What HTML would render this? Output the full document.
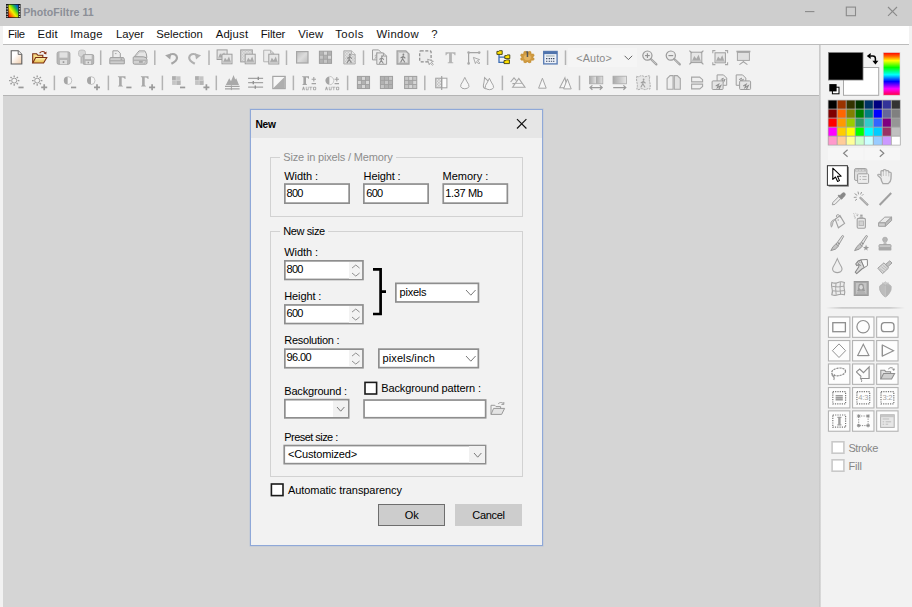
<!DOCTYPE html>
<html><head><meta charset="utf-8"><title>PhotoFiltre 11</title>
<style>
html,body{margin:0;padding:0}
body{width:912px;height:607px;overflow:hidden;position:relative;background:#f2f2f2;font-family:"Liberation Sans",sans-serif;font-size:11px}
.a{position:absolute;box-sizing:border-box}
.t{position:absolute;white-space:pre;line-height:16px;height:16px}
svg{overflow:visible}
</style></head><body>
<div class="a" style="left:0px;top:0px;width:912px;height:26px;background:#cecece"></div>
<svg class="a" style="left:6px;top:4px;" width="15" height="14" viewBox="0 0 15 14"><defs><linearGradient id="ai" x1="0" y1="1" x2="1" y2="0"><stop offset="0" stop-color="#f00"/><stop offset=".22" stop-color="#ff7a00"/><stop offset=".42" stop-color="#f4f000"/><stop offset=".56" stop-color="#9be000"/><stop offset=".7" stop-color="#22b84a"/><stop offset=".84" stop-color="#0a78b0"/><stop offset="1" stop-color="#0838d8"/></linearGradient></defs>
<rect x="0" y="0" width="14.6" height="14" fill="#161616"/><rect x="2.5" y="0.7" width="9.8" height="12.6" fill="url(#ai)"/>
<g fill="#c8c8c8"><rect x=".5" y="1.4" width="1.3" height="1.4"/><rect x=".5" y="4.1" width="1.3" height="1.4"/><rect x=".5" y="6.8" width="1.3" height="1.4"/><rect x=".5" y="9.5" width="1.3" height="1.4"/><rect x=".5" y="12" width="1.3" height="1.2"/>
<rect x="12.9" y="1.4" width="1.3" height="1.4"/><rect x="12.9" y="4.1" width="1.3" height="1.4"/><rect x="12.9" y="6.8" width="1.3" height="1.4"/><rect x="12.9" y="9.5" width="1.3" height="1.4"/><rect x="12.9" y="12" width="1.3" height="1.2"/></g></svg>
<div class="t" style="left:23.20px;top:4.33px;font-size:10.6px;color:#8b8f97;font-weight:bold;letter-spacing:0.033px;">PhotoFiltre 11</div>
<svg class="a" style="left:800px;top:0px;" width="112" height="26" viewBox="0 0 112 26"><g stroke="#8a8a8a" stroke-width="1.1" fill="none">
<path d="M5 11.6H14.4"/><rect x="46.3" y="7.1" width="9.2" height="8.6"/><path d="M88 7L97 15.8M97 7L88 15.8"/></g></svg>
<div class="a" style="left:3px;top:26px;width:906px;height:18px;background:#fff"></div>
<div class="a" style="left:3px;top:44px;width:906px;height:1px;background:#bcbcbc"></div>
<div class="t" style="left:7.90px;top:26.08px;font-size:11.3px;color:#111;letter-spacing:-0.330px;">File</div>
<div class="t" style="left:37.40px;top:26.08px;font-size:11.3px;color:#111;letter-spacing:0.233px;">Edit</div>
<div class="t" style="left:70.15px;top:26.08px;font-size:11.3px;color:#111;letter-spacing:0.252px;">Image</div>
<div class="t" style="left:115.90px;top:26.08px;font-size:11.3px;color:#111;letter-spacing:-0.023px;">Layer</div>
<div class="t" style="left:156.15px;top:26.08px;font-size:11.3px;color:#111;letter-spacing:0.018px;">Selection</div>
<div class="t" style="left:215.65px;top:26.08px;font-size:11.3px;color:#111;letter-spacing:0.207px;">Adjust</div>
<div class="t" style="left:260.65px;top:26.08px;font-size:11.3px;color:#111;letter-spacing:-0.079px;">Filter</div>
<div class="t" style="left:298.15px;top:26.08px;font-size:11.3px;color:#111;letter-spacing:0.217px;">View</div>
<div class="t" style="left:335.15px;top:26.08px;font-size:11.3px;color:#111;letter-spacing:0.502px;">Tools</div>
<div class="t" style="left:376.40px;top:26.08px;font-size:11.3px;color:#111;letter-spacing:0.413px;">Window</div>
<div class="t" style="left:431.15px;top:26.08px;font-size:11.3px;color:#111;letter-spacing:0.000px;">?</div>
<div class="a" style="left:3px;top:45px;width:816px;height:50px;background:#f2f2f2"></div>
<div class="a" style="left:3px;top:95px;width:817px;height:1px;background:#b4b4b4"></div>
<div class="a" style="left:3px;top:96px;width:816px;height:511px;background:#d5d5d5"></div>
<div class="a" style="left:819px;top:45px;width:2px;height:562px;background:linear-gradient(90deg,#c4c4c4,#dedede)"></div>
<div class="a" style="left:821px;top:45px;width:91px;height:562px;background:#f2f2f2"></div>
<svg class="a" style="left:0;top:0" width="912" height="100" viewBox="0 0 912 100"><defs>
<linearGradient id="gNew" x1="0" y1="0" x2="1" y2="1"><stop offset=".35" stop-color="#fff"/><stop offset="1" stop-color="#efc9a6"/></linearGradient>
<linearGradient id="gFold" x1="0" y1="0" x2="0" y2="1"><stop offset="0" stop-color="#fdf2b6"/><stop offset="1" stop-color="#e6bc48"/></linearGradient>
<linearGradient id="gRect" x1="0" y1="0" x2="1" y2="1"><stop offset="0" stop-color="#bcbcbc"/><stop offset=".5" stop-color="#dcdcdc"/><stop offset="1" stop-color="#bdbdbd"/></linearGradient>
<linearGradient id="gH" x1="0" y1="0" x2="1" y2="0"><stop offset="0" stop-color="#a9a9a9"/><stop offset="1" stop-color="#e6e6e6"/></linearGradient>
<linearGradient id="gH2" x1="0" y1="0" x2="1" y2="0"><stop offset="0" stop-color="#a9a9a9"/><stop offset=".5" stop-color="#e2e2e2"/><stop offset=".5" stop-color="#a9a9a9"/><stop offset="1" stop-color="#e2e2e2"/></linearGradient>
<pattern id="chk" width="3" height="3" patternUnits="userSpaceOnUse"><rect width="3" height="3" fill="#eeeeee"/><rect width="1.5" height="1.5" fill="#bcbcbc"/><rect x="1.5" y="1.5" width="1.5" height="1.5" fill="#bcbcbc"/></pattern>
</defs>
<g transform="translate(10.6,50.2)"><path d="M.6 .6H7.6L11.2 4.2V13.8H.6Z" fill="url(#gNew)" stroke="#5c5c5c" stroke-width="1.1"/><path d="M7.6 .6V4.2H11.2" fill="#f4f4f4" stroke="#5c5c5c" stroke-width=".9"/></g>
<g transform="translate(32,50.6)"><path d="M.7 12.4V3.2H4.6L5.9 4.7H10.8V7" fill="#f6dc86" stroke="#7b2d12" stroke-width="1.1"/>
<path d="M.7 12.4L3.7 6.9H14.8L11.6 12.4Z" fill="url(#gFold)" stroke="#7b2d12" stroke-width="1.1"/>
<path d="M7.6 2.6C9.4 .2 12.4 .4 13.6 2.8" fill="none" stroke="#8a3216" stroke-width="1.1"/><path d="M14.6 .8L14.3 4L11.6 3Z" fill="#8a3216"/></g>
<g transform="translate(56.6,51.4)"><rect x=".5" y=".5" width="12.8" height="12.4" rx="1.6" fill="#b6b6b6" stroke="#a6a6a6"/>
<rect x="2.9" y=".9" width="8" height="5.4" fill="#e1e1e1"/><rect x="3.4" y="8.6" width="7" height="4.2" fill="#dedede"/><rect x="6.1" y="9.8" width="1.6" height="1.8" fill="#9a9a9a"/></g>
<g transform="translate(78,49.2)"><rect x=".5" y=".9" width="7" height="6.6" rx="2.4" fill="#d6d6d6" stroke="#c2c2c2"/>
<path d="M3.2 7.5V14.2" stroke="#b0b0b0" stroke-width="1.4"/>
<rect x="4.9" y="5.4" width="10.8" height="9.8" rx="1.4" fill="#b6b6b6" stroke="#a8a8a8"/><rect x="6.8" y="5.9" width="6.9" height="4" fill="#e2e2e2"/><rect x="7.6" y="11.8" width="5.4" height="3.2" fill="#dedede"/><rect x="9.6" y="12.6" width="1.4" height="1.5" fill="#9a9a9a"/></g>
<rect x="99.95" y="50.4" width="1.5" height="14.6" fill="#b3b3b3"/>
<g transform="translate(109.3,50.2)"><path d="M3.6 7.2V.6H8.6L11 3V7.2" fill="#ededed" stroke="#9e9e9e"/><path d="M5.6 3.4H7.2" stroke="#aaa"/>
<path d="M1 7.4H14.2L15 9V13.6H.5V9Z" fill="#cdcdcd" stroke="#9e9e9e"/><path d="M.8 10.6H14.8" stroke="#a4a4a4"/><rect x="11.2" y="8.4" width="1.8" height="1" fill="#8f8f8f"/></g>
<g transform="translate(132.6,50.2)"><path d="M1.6 6.6L6.4 .7H12.2Q14.2 3 14.3 7.4L7 7Z" fill="#e6e6e6" stroke="#9e9e9e"/><path d="M3.4 6.2L7 1.8H11.6" fill="none" stroke="#c4c4c4" stroke-width=".8"/>
<path d="M.6 7.6Q.6 6.6 1.6 6.6H10.6Q14.4 6.8 14.4 9.4V12.6Q14.4 14 13 14H2Q.6 14 .6 12.6Z" fill="#d2d2d2" stroke="#9e9e9e"/>
<path d="M1 10H14" stroke="#a6a6a6"/><rect x="6.4" y="11.2" width="3.8" height="1.1" fill="#8c8c8c"/><path d="M11.4 13.6L14 10.2" stroke="#b4b4b4"/></g>
<rect x="154.05" y="50.4" width="1.5" height="14.6" fill="#b3b3b3"/>
<g transform="translate(164.8,52.2)"><path d="M6.6 11.6Q12.4 8.4 12.2 5.4Q11.6 1.8 8 1.8Q5.8 1.8 4.2 3.6" fill="none" stroke="#a6a6a6" stroke-width="2.2"/><path d="M.3 3L6.4 1.4L5.4 7.4Z" fill="#a6a6a6"/></g>
<g transform="translate(188.2,52.2)"><path d="M6.6 11.6Q.8 8.4 1 5.4Q1.6 1.8 5.2 1.8Q7.4 1.8 9 3.6" fill="none" stroke="#b0b0b0" stroke-width="2.2"/><path d="M12.9 3L6.8 1.4L7.8 7.4Z" fill="#b0b0b0"/></g>
<rect x="208.25" y="50.4" width="1.5" height="14.6" fill="#b3b3b3"/>
<g transform="translate(216.6,49.4)"><rect x="0.5" y="0.5" width="10" height="9.6" fill="#e6e6e6" stroke="#9e9e9e"/><path d="M1.5 8.5L3.5 3.956L5.5 6.452L7.5 2.804L9.5 8.5Z" fill="#a9a9a9"/><rect x="1.1" y="7.8999999999999995" width="8.8" height="1.6" fill="#c9c9c9"/><rect x="5.4" y="4.8" width="10" height="9.6" fill="#e6e6e6" stroke="#9e9e9e"/><path d="M6.4 12.799999999999999L8.4 8.256L10.4 10.751999999999999L12.4 7.103999999999999L14.4 12.799999999999999Z" fill="#a9a9a9"/><rect x="6.0" y="12.2" width="8.8" height="1.6" fill="#c9c9c9"/></g>
<g transform="translate(240.2,49.4)"><rect x=".5" y=".5" width="11.6" height="12" fill="url(#chk)" stroke="#9e9e9e"/><rect x="5" y="4.8" width="10" height="9.6" fill="#e6e6e6" stroke="#9e9e9e"/><path d="M6 12.799999999999999L8.0 8.256L10.0 10.751999999999999L12.0 7.103999999999999L14 12.799999999999999Z" fill="#a9a9a9"/><rect x="5.6" y="12.2" width="8.8" height="1.6" fill="#c9c9c9"/></g>
<g transform="translate(263.2,49.4)"><path d="M.5 .8H7.4L10.4 3.8V12.4H.5Z" fill="#ebebeb" stroke="#b4b4b4"/><path d="M7.4 .8V3.8H10.4" fill="none" stroke="#b4b4b4"/><rect x="5.6" y="4.8" width="10" height="9.8" fill="#e6e6e6" stroke="#9e9e9e"/><path d="M6.6 13.000000000000002L8.6 8.328L10.6 10.876000000000001L12.6 7.151999999999999L14.6 13.000000000000002Z" fill="#a9a9a9"/><rect x="6.199999999999999" y="12.400000000000002" width="8.8" height="1.6" fill="#c9c9c9"/></g>
<rect x="285.75" y="50.4" width="1.5" height="14.6" fill="#b3b3b3"/>
<g transform="translate(296,51)"><rect x=".6" y=".6" width="11.4" height="11.4" fill="url(#gRect)" stroke="#a6a6a6" stroke-width="1.2"/></g>
<g transform="translate(319,50.8)"><rect x="0.40" y="0.40" width="4.05" height="4.05" fill="#b2b2b2"/><rect x="4.45" y="0.40" width="4.05" height="4.05" fill="#d6d6d6"/><rect x="8.50" y="0.40" width="4.05" height="4.05" fill="#b2b2b2"/><rect x="0.40" y="4.45" width="4.05" height="4.05" fill="#c6c6c6"/><rect x="4.45" y="4.45" width="4.05" height="4.05" fill="#b2b2b2"/><rect x="8.50" y="4.45" width="4.05" height="4.05" fill="#d6d6d6"/><rect x="0.40" y="8.50" width="4.05" height="4.05" fill="#b2b2b2"/><rect x="4.45" y="8.50" width="4.05" height="4.05" fill="#c6c6c6"/><rect x="8.50" y="8.50" width="4.05" height="4.05" fill="#b2b2b2"/><path d="M4.45 .4V12.55M8.5 .4V12.55M.4 4.45H12.55M.4 8.5H12.55" stroke="#9e9e9e" stroke-width=".9"/><rect x=".4" y=".4" width="12.15" height="12.15" fill="none" stroke="#9e9e9e" stroke-width="1"/></g>
<g transform="translate(343.2,50.2)"><path d="M.6 .6H8.4L12 4.2V13.8H.6Z" fill="url(#chk)" stroke="#b0b0b0"/><path d="M8.4 .6V4.2H12" fill="#eee" stroke="#b0b0b0"/><g transform="translate(3,3.6) scale(1.05)" fill="none" stroke="#8e8e8e" stroke-width="1.1" stroke-linecap="round"><circle cx="3.6" cy=".9" r=".9" fill="#8e8e8e" stroke="none"/><path d="M3.4 2.2L2.8 5.2L1 8.4M2.8 5.2L4.8 8.4M1.2 4.2L3.4 2.8L5.2 4.4"/></g></g>
<rect x="362.75" y="50.4" width="1.5" height="14.6" fill="#b3b3b3"/>
<g transform="translate(372,49.3)"><path d="M.5 .6H6.6L9.4 3.4V10.6H.5Z" fill="#ededed" stroke="#9e9e9e"/><g transform="translate(2,3) scale(0.8)" fill="none" stroke="#aaa" stroke-width="1.1" stroke-linecap="round"><circle cx="3.6" cy=".9" r=".9" fill="#aaa" stroke="none"/><path d="M3.4 2.2L2.8 5.2L1 8.4M2.8 5.2L4.8 8.4M1.2 4.2L3.4 2.8L5.2 4.4"/></g><path d="M4.8 3.6H11.4L14.6 6.8V15H4.8Z" fill="#e9e9e9" stroke="#9e9e9e"/><path d="M11.4 3.6V6.8H14.6" fill="none" stroke="#9e9e9e"/><g transform="translate(6.6,6) scale(0.95)" fill="none" stroke="#8e8e8e" stroke-width="1.1" stroke-linecap="round"><circle cx="3.6" cy=".9" r=".9" fill="#8e8e8e" stroke="none"/><path d="M3.4 2.2L2.8 5.2L1 8.4M2.8 5.2L4.8 8.4M1.2 4.2L3.4 2.8L5.2 4.4"/></g></g>
<g transform="translate(396.4,50.2)"><path d="M.7 .7H9.4L12.6 3.9V13.8H.7Z" fill="#c9c9c9" stroke="#a2a2a2" stroke-width="1.3"/><rect x="2.6" y="2.8" width="8.2" height="9" fill="#e2e2e2"/><g transform="translate(3.4,3.4) scale(1.0)" fill="none" stroke="#868686" stroke-width="1.1" stroke-linecap="round"><circle cx="3.6" cy=".9" r=".9" fill="#868686" stroke="none"/><path d="M3.4 2.2L2.8 5.2L1 8.4M2.8 5.2L4.8 8.4M1.2 4.2L3.4 2.8L5.2 4.4"/></g></g>
<g transform="translate(419,50.2)"><rect x=".7" y=".7" width="11.4" height="11" rx="1" fill="#ededed" stroke="#8c8c8c" stroke-width="1.2" stroke-dasharray="3 1.6"/><path d="M8.6 9L14.4 11.2L12.2 12L14.4 14.2L13.4 15L11.2 12.8L10.2 14.6Z" fill="#f4f4f4" stroke="#a2a2a2" stroke-width=".9"/></g>
<g transform="translate(445.2,52)"><path d="M.3 .2H10.3V3.2H9.4Q9.2 1.6 7.6 1.6H6.7V9.4Q6.7 10.3 8.1 10.4V11.2H2.5V10.4Q3.9 10.3 3.9 9.4V1.6H3Q1.4 1.6 1.2 3.2H.3Z" fill="#b4b4b4"/></g>
<g transform="translate(467,51)"><path d="M1.6 12.4V1.6H12.2" fill="none" stroke="#a4a4a4" stroke-width="1.2"/><circle cx="1.6" cy="1.6" r="1.3" fill="#a9a9a9"/><circle cx="12.2" cy="1.6" r="1.3" fill="#a9a9a9"/><circle cx="1.6" cy="12.4" r="1.3" fill="#a9a9a9"/><path d="M6.4 6.4L12.6 8.6L10.4 9.6L12.8 12L11.8 13L9.4 10.6L8.4 12.6Z" fill="#f2f2f2" stroke="#a4a4a4" stroke-width=".9"/></g>
<rect x="486.85" y="50.4" width="1.5" height="14.6" fill="#b3b3b3"/>
<g transform="translate(496.4,50.2)"><path d="M2.6 4V12.2H8M2.6 7H8.6" fill="none" stroke="#3b6cb4" stroke-width="1.3"/>
<g fill="#ffe100" stroke="#2a2a00" stroke-width=".8"><path d="M.5 1.2H2.4L3 .5H5.8V4.2H.5Z"/><path d="M8.4 5.4H10.2L10.8 4.7H13.4V8.4H8.4Z"/><path d="M7.6 10.4H9.4L10 9.7H13V13.4H7.6Z"/></g></g>
<g transform="translate(520,50.6)"><path d="M12.03 7.28L13.28 7.99L12.80 8.97L11.32 8.72L10.02 9.83L10.31 11.08L9.16 11.48L8.32 10.42L6.48 10.42L5.64 11.48L4.49 11.08L4.78 9.83L3.48 8.72L2.00 8.97L1.52 7.99L2.77 7.28L2.77 5.72L1.52 5.01L2.00 4.03L3.48 4.28L4.78 3.17L4.49 1.92L5.64 1.52L6.48 2.58L8.32 2.58L9.16 1.52L10.31 1.92L10.02 3.17L11.32 4.28L12.80 4.03L13.28 5.01L12.03 5.72Z" fill="#d9a54c" stroke="#d29c42" stroke-width="2" stroke-linejoin="round"/><path d="M12.03 7.28L13.28 7.99L12.80 8.97L11.32 8.72L10.02 9.83L10.31 11.08L9.16 11.48L8.32 10.42L6.48 10.42L5.64 11.48L4.49 11.08L4.78 9.83L3.48 8.72L2.00 8.97L1.52 7.99L2.77 7.28L2.77 5.72L1.52 5.01L2.00 4.03L3.48 4.28L4.78 3.17L4.49 1.92L5.64 1.52L6.48 2.58L8.32 2.58L9.16 1.52L10.31 1.92L10.02 3.17L11.32 4.28L12.80 4.03L13.28 5.01L12.03 5.72Z" fill="none" stroke="#c08f36" stroke-width=".5" stroke-linejoin="round" transform="translate(7.4,6.5) scale(1.16) translate(-7.4,-6.5)"/><ellipse cx="7.4" cy="6.9" rx="3.4" ry="2.8" fill="#e3b462"/>
<path d="M6.7 .6H8.2V6.4H6.7Z" fill="#555"/><path d="M5.9 1.8L7 .8" stroke="#555" stroke-width=".9"/></g>
<g transform="translate(543,50.8)"><rect x=".7" y=".7" width="13.4" height="12.4" fill="#eef2f9" stroke="#5e80b6" stroke-width="1.4"/><rect x=".7" y=".7" width="13.4" height="2.6" fill="#4f74ad"/>
<path d="M3 5.2H11.6" stroke="#9aa" stroke-width="1"/><path d="M3 7.8H4.4M5.6 7.8H11.6M3 10.4H4.4M5.6 10.4H11.6" stroke="#3a4a66" stroke-width="1.1" stroke-dasharray="1.4 .8"/></g>
<rect x="564.75" y="50.4" width="1.5" height="14.6" fill="#b3b3b3"/>
<g transform="translate(642,50.2)"><circle cx="5.4" cy="5.4" r="4.6" fill="#ececec" stroke="#9a9a9a" stroke-width="1.2"/><path d="M8.8 8.8L14.4 14.2" stroke="#a0a0a0" stroke-width="2.2" stroke-linecap="round"/><path d="M9.4 9.4L14 13.8" stroke="#d4d4d4" stroke-width=".7"/><path d="M3 5.4H7.8" stroke="#909090" stroke-width="1.1"/><path d="M5.4 3V7.8" stroke="#909090" stroke-width="1.1"/></g>
<g transform="translate(665.4,50.2)"><circle cx="5.4" cy="5.4" r="4.6" fill="#ececec" stroke="#9a9a9a" stroke-width="1.2"/><path d="M8.8 8.8L14.4 14.2" stroke="#a0a0a0" stroke-width="2.2" stroke-linecap="round"/><path d="M9.4 9.4L14 13.8" stroke="#d4d4d4" stroke-width=".7"/><path d="M3 5.4H7.8" stroke="#909090" stroke-width="1.1"/></g>
<g transform="translate(689,50.2)"><rect x="2" y="2" width="10.8" height="10.4" fill="#e6e6e6" stroke="#9e9e9e"/><path d="M3 10.8L5.24 5.744L7.4 8.448L9.559999999999999 4.496L11.8 10.8Z" fill="#a9a9a9"/><rect x="2.6" y="10.2" width="9.600000000000001" height="1.6" fill="#c9c9c9"/><path d="M.4 .4L3 3M14.4 .4L11.8 3M.4 14.2L3 11.6M14.4 14.2L11.8 11.6" stroke="#a0a0a0" stroke-width="1.2"/></g>
<g transform="translate(712.4,50.2)"><rect x="2.6" y="2.6" width="10.4" height="10" fill="#e6e6e6" stroke="#9e9e9e"/><path d="M3.6 11.0L5.720000000000001 6.199999999999999L7.800000000000001 8.8L9.879999999999999 5.0L12.0 11.0Z" fill="#a9a9a9"/><rect x="3.2" y="10.399999999999999" width="9.200000000000001" height="1.6" fill="#c9c9c9"/><path d="M.4 3V.4H3M12.6 .4H15.2V3M.4 12V14.4H3M12.6 14.4H15.2V12" fill="none" stroke="#a6a6a6" stroke-width="1.1"/></g>
<g transform="translate(736,50.4)"><rect x=".4" y=".3" width="14" height="1.6" fill="#a6a6a6"/><rect x="1.4" y="2" width="12" height="8" fill="#e0e0e0" stroke="#a6a6a6"/><path d="M7.4 10V12M7.4 11.4L3.4 14.2M7.4 11.4L11.4 14.2" stroke="#a6a6a6" stroke-width="1.1" fill="none"/></g>
<rect x="568" y="48" width="69" height="19" fill="#f5f5f5"/>
<path d="M624.6 55.8L628.4 59.6L632.2 55.8" fill="none" stroke="#666" stroke-width="1"/>
<g transform="translate(9,75.4)"><circle cx="5.2" cy="5.2" r="2.5" fill="#f4f4f4" stroke="#9c9c9c" stroke-width="1"/><path d="M8.70 5.20L10.40 5.20" stroke="#9c9c9c" stroke-width="1.35"/><path d="M7.67 7.67L8.88 8.88" stroke="#9c9c9c" stroke-width="1.35"/><path d="M5.20 8.70L5.20 10.40" stroke="#9c9c9c" stroke-width="1.35"/><path d="M2.73 7.67L1.52 8.88" stroke="#9c9c9c" stroke-width="1.35"/><path d="M1.70 5.20L0.00 5.20" stroke="#9c9c9c" stroke-width="1.35"/><path d="M2.73 2.73L1.52 1.52" stroke="#9c9c9c" stroke-width="1.35"/><path d="M5.20 1.70L5.20 0.00" stroke="#9c9c9c" stroke-width="1.35"/><path d="M7.67 2.73L8.88 1.52" stroke="#9c9c9c" stroke-width="1.35"/><rect x="9.4" y="11.2" width="5.2" height="1.7" fill="#9a9a9a"/></g>
<g transform="translate(32,75.4)"><circle cx="5.2" cy="5.2" r="2.5" fill="#f4f4f4" stroke="#9c9c9c" stroke-width="1"/><path d="M8.70 5.20L10.40 5.20" stroke="#9c9c9c" stroke-width="1.35"/><path d="M7.67 7.67L8.88 8.88" stroke="#9c9c9c" stroke-width="1.35"/><path d="M5.20 8.70L5.20 10.40" stroke="#9c9c9c" stroke-width="1.35"/><path d="M2.73 7.67L1.52 8.88" stroke="#9c9c9c" stroke-width="1.35"/><path d="M1.70 5.20L0.00 5.20" stroke="#9c9c9c" stroke-width="1.35"/><path d="M2.73 2.73L1.52 1.52" stroke="#9c9c9c" stroke-width="1.35"/><path d="M5.20 1.70L5.20 0.00" stroke="#9c9c9c" stroke-width="1.35"/><path d="M7.67 2.73L8.88 1.52" stroke="#9c9c9c" stroke-width="1.35"/><path d="M9.2 11.9H15.2M12.2 8.9V14.9" stroke="#9a9a9a" stroke-width="1.7"/></g>
<rect x="53.65" y="75.6" width="1.5" height="14.6" fill="#b3b3b3"/>
<g transform="translate(63.6,76.4)"><path d="M4.2 .2A4 4 0 0 0 4.2 8.2Z" fill="#a6a6a6"/><path d="M4.2 .2A4 4 0 0 1 4.2 8.2" fill="#f6f6f6" stroke="#b8b8b8" stroke-width=".8"/><rect x="7.4" y="10.2" width="5.2" height="1.7" fill="#9a9a9a"/></g>
<g transform="translate(86.8,76.4)"><path d="M4.2 .2A4 4 0 0 0 4.2 8.2Z" fill="#a6a6a6"/><path d="M4.2 .2A4 4 0 0 1 4.2 8.2" fill="#f6f6f6" stroke="#b8b8b8" stroke-width=".8"/><path d="M7.2 10.9H13.2M10.2 7.9V13.9" stroke="#9a9a9a" stroke-width="1.7"/></g>
<rect x="107.65" y="75.6" width="1.5" height="14.6" fill="#b3b3b3"/>
<g transform="translate(117.7,76)"><path d="M.2 .2H7.8V3H7.1Q6.9 1.4 5.2 1.4H4V9Q4 9.8 5.2 9.9V10.6H.4V9.9Q1.4 9.8 1.4 9V1.8Q1.4 1 .2 .9Z" fill="#a8a8a8"/><rect x="8.6" y="10.6" width="5.2" height="1.7" fill="#9a9a9a"/></g>
<g transform="translate(140.7,76)"><path d="M.2 .2H7.8V3H7.1Q6.9 1.4 5.2 1.4H4V9Q4 9.8 5.2 9.9V10.6H.4V9.9Q1.4 9.8 1.4 9V1.8Q1.4 1 .2 .9Z" fill="#a8a8a8"/><path d="M8.4 11.3H14.4M11.4 8.3V14.3" stroke="#9a9a9a" stroke-width="1.7"/></g>
<rect x="161.65" y="75.6" width="1.5" height="14.6" fill="#b3b3b3"/>
<g transform="translate(171.8,76)"><rect x=".3" y=".3" width="8.4" height="8.6" fill="#c4c4c4"/><rect x=".3" y=".3" width="4" height="4" fill="#adadad"/><rect x="4.6" y="4.6" width="4.1" height="4.3" fill="#b4b4b4"/><path d="M4.4 .3V8.9M.3 4.4H8.7" stroke="#d8d8d8" stroke-width=".7"/><rect x="8.2" y="10.6" width="5.2" height="1.7" fill="#9a9a9a"/></g>
<g transform="translate(194.8,76)"><rect x=".3" y=".3" width="8.4" height="8.6" fill="#c4c4c4"/><rect x=".3" y=".3" width="4" height="4" fill="#adadad"/><rect x="4.6" y="4.6" width="4.1" height="4.3" fill="#b4b4b4"/><path d="M4.4 .3V8.9M.3 4.4H8.7" stroke="#d8d8d8" stroke-width=".7"/><path d="M8.6 11.3H14.6M11.6 8.3V14.3" stroke="#9a9a9a" stroke-width="1.7"/></g>
<rect x="215.55" y="75.6" width="1.5" height="14.6" fill="#b3b3b3"/>
<g transform="translate(224.8,74.7)"><path d="M1 10.4L4.4 3.6L6.2 6.6L8.8 .4L10.4 4.8L11.4 3.6L14.2 10.4Z" fill="#a9a9a9"/><path d="M.2 11.6H14.8M.2 14.2H14.8" stroke="#a2a2a2" stroke-width="1.2"/><path d="M6.6 10.6V15.4" stroke="#a2a2a2" stroke-width="1"/></g>
<g transform="translate(247.9,76.7)"><path d="M.2 1.6H15.2M.2 6H15.2M.2 10.4H15.2" stroke="#a4a4a4" stroke-width="1.2"/><path d="M10.4 0V3.2M5.4 4.4V7.6M7.4 8.8V12" stroke="#909090" stroke-width="1.4"/></g>
<g transform="translate(272.2,75.8)"><rect x=".6" y=".6" width="12.4" height="12.2" fill="#f7f7f7" stroke="#a6a6a6" stroke-width="1.2"/><path d="M12.6 1L12.6 12.4H1Z" fill="#aeaeae"/></g>
<rect x="292.65" y="75.6" width="1.5" height="14.6" fill="#b3b3b3"/>
<g transform="translate(302,76)"><path d="M.2 .2H7V2.8H6.4Q6.2 1.4 4.8 1.4H4V7.6Q4 8.3 5 8.4V9H.4V8.4Q1.4 8.3 1.4 7.6V1.6Q1.4 1 .2 .9Z" fill="#a4a4a4"/><path d="M9.6 3.2H14M11.8 1V5.4M9.6 7.6H14" stroke="#a2a2a2" stroke-width="1.1"/><g fill="#a6a6a6"><path d="M0 14.2L1 10.8H2L3 14.2H2.2L2 13.4H1L.8 14.2ZM3.8 10.8H4.6V13.2Q4.6 13.6 5.2 13.6Q5.8 13.6 5.8 13.2V10.8H6.6V13.4Q6.6 14.3 5.2 14.3Q3.8 14.3 3.8 13.4ZM7.2 10.8H10.4V11.5H9.2V14.2H8.4V11.5H7.2Z"/><rect x="11" y="10.8" width="3.2" height="3.4" rx="1"/></g><rect x="11.9" y="11.6" width="1.4" height="1.8" fill="#f2f2f2"/></g>
<g transform="translate(325,76)"><path d="M4.6 .4A4.2 4.2 0 0 0 4.6 8.8Z" fill="#a4a4a4"/><path d="M4.6 .4A4.2 4.2 0 0 1 4.6 8.8" fill="#f4f4f4" stroke="#bdbdbd" stroke-width=".8"/><path d="M9.6 3.2H14M11.8 1V5.4M9.6 7.6H14" stroke="#a2a2a2" stroke-width="1.1"/><g fill="#a6a6a6"><path d="M0 14.2L1 10.8H2L3 14.2H2.2L2 13.4H1L.8 14.2ZM3.8 10.8H4.6V13.2Q4.6 13.6 5.2 13.6Q5.8 13.6 5.8 13.2V10.8H6.6V13.4Q6.6 14.3 5.2 14.3Q3.8 14.3 3.8 13.4ZM7.2 10.8H10.4V11.5H9.2V14.2H8.4V11.5H7.2Z"/><rect x="11" y="10.8" width="3.2" height="3.4" rx="1"/></g><rect x="11.9" y="11.6" width="1.4" height="1.8" fill="#f2f2f2"/></g>
<rect x="346.85" y="75.6" width="1.5" height="14.6" fill="#b3b3b3"/>
<g transform="translate(357,76)"><rect x="0.40" y="0.40" width="4.05" height="4.05" fill="#b2b2b2"/><rect x="4.45" y="0.40" width="4.05" height="4.05" fill="#d6d6d6"/><rect x="8.50" y="0.40" width="4.05" height="4.05" fill="#b2b2b2"/><rect x="0.40" y="4.45" width="4.05" height="4.05" fill="#d6d6d6"/><rect x="4.45" y="4.45" width="4.05" height="4.05" fill="#b2b2b2"/><rect x="8.50" y="4.45" width="4.05" height="4.05" fill="#d6d6d6"/><rect x="0.40" y="8.50" width="4.05" height="4.05" fill="#b2b2b2"/><rect x="4.45" y="8.50" width="4.05" height="4.05" fill="#d6d6d6"/><rect x="8.50" y="8.50" width="4.05" height="4.05" fill="#b2b2b2"/><path d="M4.45 .4V12.55M8.5 .4V12.55M.4 4.45H12.55M.4 8.5H12.55" stroke="#9e9e9e" stroke-width=".9"/><rect x=".4" y=".4" width="12.15" height="12.15" fill="none" stroke="#9e9e9e" stroke-width="1"/></g>
<g transform="translate(380,76)"><rect x="0.40" y="0.40" width="4.05" height="4.05" fill="#b2b2b2"/><rect x="4.45" y="0.40" width="4.05" height="4.05" fill="#b2b2b2"/><rect x="8.50" y="0.40" width="4.05" height="4.05" fill="#c6c6c6"/><rect x="0.40" y="4.45" width="4.05" height="4.05" fill="#b2b2b2"/><rect x="4.45" y="4.45" width="4.05" height="4.05" fill="#c6c6c6"/><rect x="8.50" y="4.45" width="4.05" height="4.05" fill="#b2b2b2"/><rect x="0.40" y="8.50" width="4.05" height="4.05" fill="#c6c6c6"/><rect x="4.45" y="8.50" width="4.05" height="4.05" fill="#b2b2b2"/><rect x="8.50" y="8.50" width="4.05" height="4.05" fill="#b2b2b2"/><path d="M4.45 .4V12.55M8.5 .4V12.55M.4 4.45H12.55M.4 8.5H12.55" stroke="#9e9e9e" stroke-width=".9"/><rect x=".4" y=".4" width="12.15" height="12.15" fill="none" stroke="#9e9e9e" stroke-width="1"/></g>
<g transform="translate(404.2,76)"><rect x="0.40" y="0.40" width="4.05" height="4.05" fill="#c6c6c6"/><rect x="4.45" y="0.40" width="4.05" height="4.05" fill="#d6d6d6"/><rect x="8.50" y="0.40" width="4.05" height="4.05" fill="#c6c6c6"/><rect x="0.40" y="4.45" width="4.05" height="4.05" fill="#c6c6c6"/><rect x="4.45" y="4.45" width="4.05" height="4.05" fill="#b2b2b2"/><rect x="8.50" y="4.45" width="4.05" height="4.05" fill="#d6d6d6"/><rect x="0.40" y="8.50" width="4.05" height="4.05" fill="#c6c6c6"/><rect x="4.45" y="8.50" width="4.05" height="4.05" fill="#d6d6d6"/><rect x="8.50" y="8.50" width="4.05" height="4.05" fill="#c6c6c6"/><path d="M4.45 .4V12.55M8.5 .4V12.55M.4 4.45H12.55M.4 8.5H12.55" stroke="#9e9e9e" stroke-width=".9"/><rect x=".4" y=".4" width="12.15" height="12.15" fill="none" stroke="#9e9e9e" stroke-width="1"/></g>
<rect x="424.05" y="75.6" width="1.5" height="14.6" fill="#b3b3b3"/>
<g transform="translate(435.2,76)"><rect x=".5" y="2.2" width="6" height="9.6" fill="url(#chk)" stroke="#a2a2a2"/><rect x="6.5" y="2.2" width="5.2" height="9.6" fill="#fbfbfb" stroke="#a2a2a2"/><path d="M6.5 0V14" stroke="#a0a0a0" stroke-width="1.1"/></g>
<g transform="translate(460,77)"><path d="M4.8 .4Q6.6 4.4 8.6 7.4Q9.8 10 7.6 11.2Q4.8 12.4 2 11.2Q-.2 10 1 7.4Q3 4.4 4.8 .4Z" fill="#f6f6f6" stroke="#a6a6a6" stroke-width="1"/></g>
<g transform="translate(482,76.7)"><g transform="rotate(-20 5 7)"><path d="M4.8 .4Q6.6 4.4 8.6 7.4Q9.8 10 7.6 11.2Q4.8 12.4 2 11.2Q-.2 10 1 7.4Q3 4.4 4.8 .4Z" fill="#f6f6f6" stroke="#a6a6a6" stroke-width="1"/></g><g transform="translate(2.6,1.2)"><path d="M4.8 .4Q6.6 4.4 8.6 7.4Q9.8 10 7.6 11.2Q4.8 12.4 2 11.2Q-.2 10 1 7.4Q3 4.4 4.8 .4Z" fill="#f6f6f6" stroke="#a6a6a6" stroke-width="1"/></g></g>
<rect x="501.65" y="75.6" width="1.5" height="14.6" fill="#b3b3b3"/>
<g transform="translate(510,77)"><path d="M.6 5L4 .8L6.4 3.6M2.4 6.6L7.2 6.6" fill="none" stroke="#a6a6a6" stroke-width="1.1"/><path d="M2.6 10.2L8.8 1.4L15 10.2Z" fill="#f6f6f6" stroke="#a6a6a6" stroke-width="1.1"/><path d="M5.4 6.4H12.2" stroke="#b4b4b4"/></g>
<g transform="translate(538,77.6)"><path d="M4.4 .6L8.2 10.6H.6Z" fill="#f7f7f7" stroke="#a6a6a6" stroke-width="1"/></g>
<g transform="translate(560.6,76.7)"><g transform="translate(0,.4) skewX(-8)"><path d="M4.4 .6L8.2 10.6H.6Z" fill="#f7f7f7" stroke="#a6a6a6" stroke-width="1"/></g><g transform="translate(2.4,1.6)"><path d="M4.4 .6L8.2 10.6H.6Z" fill="#f7f7f7" stroke="#a6a6a6" stroke-width="1"/></g></g>
<rect x="578.75" y="75.6" width="1.5" height="14.6" fill="#b3b3b3"/>
<g transform="translate(589,76)"><rect x=".4" y=".2" width="13.4" height="7.6" fill="url(#gH2)" stroke="#a9a9a9" stroke-width=".8"/><path d="M1.2 11.6H13M3.4 9.4L1 11.6L3.4 13.8M10.8 9.4L13.2 11.6L10.8 13.8" fill="none" stroke="#9a9a9a" stroke-width="1.2"/></g>
<g transform="translate(612.6,76)"><rect x=".4" y=".2" width="13.4" height="7.6" fill="url(#gH)" stroke="#a9a9a9" stroke-width=".8"/><path d="M.6 11.6H13M10.8 9.4L13.2 11.6L10.8 13.8" fill="none" stroke="#9a9a9a" stroke-width="1.2"/></g>
<g transform="translate(636.2,75.4)"><path d="M.6 .8Q2 2 3.6 .8Q5.2 -.2 7.2 .8Q9 1.8 10.8 .8Q12.4 0 13.8 .8Q12.6 4 13.6 7Q14.4 10.4 13.6 13.8Q11.8 12.8 10.4 13.8Q8.8 14.6 7.2 13.8Q5.4 12.8 3.8 13.8Q2 14.6 .6 13.8Q1.6 10.6 .8 7.4Q0 4 .6 .8Z" fill="#e6e6e6" stroke="#a9a9a9" stroke-width="1" stroke-dasharray="2 .8"/><g transform="translate(3.8,3.2) scale(1.0)" fill="none" stroke="#a0a0a0" stroke-width="1.1" stroke-linecap="round"><circle cx="3.6" cy=".9" r=".9" fill="#a0a0a0" stroke="none"/><path d="M3.4 2.2L2.8 5.2L1 8.4M2.8 5.2L4.8 8.4M1.2 4.2L3.4 2.8L5.2 4.4"/></g></g>
<rect x="656.25" y="75.6" width="1.5" height="14.6" fill="#b3b3b3"/>
<g transform="translate(666.5,75)"><path d="M.6 3.6L3.6 .6H6.6V14.2H.6Z" fill="#eeeeee" stroke="#a6a6a6" stroke-width="1.1"/><path d="M7.8 .6H10.8L13.8 3.6V14.2H7.8Z" fill="#e2e2e2" stroke="#a6a6a6" stroke-width="1.1"/></g>
<g transform="translate(691,76.5)"><path d="M.6 .6H8.6L11.6 3.2V5.4H.6Z" fill="#efefef" stroke="#a6a6a6" stroke-width="1.1"/><path d="M.6 7.6H11.6V10L8.8 12.4H.6Z" fill="#efefef" stroke="#a6a6a6" stroke-width="1.1"/></g>
<g transform="translate(711.5,74.3)"><path d="M5.6 .6H12L15.2 3.8V11H5.6Z" fill="#ededed" stroke="#9e9e9e"/><g transform="translate(7.6,1.8)"><path d="M1.6 3.6L4.2 2L3 5L6 3.2L4.4 6.4" fill="none" stroke="#8e8e8e" stroke-width=".9"/></g><rect x=".6" y="6.6" width="11" height="8.6" rx="1" fill="#e4e4e4" stroke="#9e9e9e"/><g transform="translate(2.4,7.6) scale(1.15)"><path d="M1.6 3.6L4.2 2L3 5L6 3.2L4.4 6.4" fill="none" stroke="#8e8e8e" stroke-width=".9"/></g></g>
<g transform="translate(735.6,74.3)"><path d="M.6 .6H7L10.2 3.8V11H.6Z" fill="#ededed" stroke="#9e9e9e"/><g transform="translate(1.8,1.8)"><path d="M1.6 3.6L4.2 2L3 5L6 3.2L4.4 6.4" fill="none" stroke="#8e8e8e" stroke-width=".9"/></g><rect x="4" y="6.6" width="11" height="8.6" rx="1" fill="#e4e4e4" stroke="#9e9e9e"/><g transform="translate(5.8,7.6) scale(1.15)"><path d="M1.6 3.6L4.2 2L3 5L6 3.2L4.4 6.4" fill="none" stroke="#8e8e8e" stroke-width=".9"/></g></g></svg>
<div class="t" style="left:576.20px;top:49.76px;font-size:10.8px;color:#8a8a8a;letter-spacing:0.162px;">&lt;Auto&gt;</div>
<svg class="a" style="left:0;top:0" width="912" height="607" viewBox="0 0 912 607"><defs>
<linearGradient id="hue" x1="0" y1="0" x2="0" y2="1">
<stop offset="0" stop-color="#ff0000"/><stop offset=".09" stop-color="#ff6a00"/><stop offset=".19" stop-color="#ffff00"/><stop offset=".35" stop-color="#00ff00"/>
<stop offset=".52" stop-color="#00ffff"/><stop offset=".68" stop-color="#0000ff"/><stop offset=".85" stop-color="#ff00ff"/><stop offset="1" stop-color="#ff0040"/></linearGradient>
<linearGradient id="hsep" x1="0" y1="0" x2="1" y2="0"><stop offset="0" stop-color="#bdbdbd" stop-opacity="0"/><stop offset=".2" stop-color="#c2c2c2"/><stop offset=".8" stop-color="#c2c2c2"/><stop offset="1" stop-color="#bdbdbd" stop-opacity="0"/></linearGradient>
<pattern id="chk2" width="2" height="2" patternUnits="userSpaceOnUse"><rect width="2" height="2" fill="#ececec"/><rect width="1" height="1" fill="#b2b2b2"/><rect x="1" y="1" width="1" height="1" fill="#b2b2b2"/></pattern>
</defs>
<rect x="843.5" y="67.5" width="35.2" height="27.8" fill="#fff" stroke="#a8a8a8" stroke-width="1"/>
<rect x="828.4" y="52.6" width="34.6" height="27.4" fill="#000" stroke="#7c7c7c" stroke-width=".8"/>
<g transform="translate(866.8,53)"><path d="M3.6 3H6.2Q8.6 3 8.6 5.6V8.4" fill="none" stroke="#000" stroke-width="1.5"/><path d="M0 3L3.9 0V6Z" fill="#000"/><path d="M8.6 11.6L5.6 7.8H11.6Z" fill="#000"/></g>
<rect x="832.4" y="87.2" width="6.6" height="6.6" fill="#fff" stroke="#000" stroke-width="1"/><rect x="829.3" y="84.1" width="7.3" height="7.3" fill="#000"/>
<rect x="883.2" y="52.6" width="16.8" height="42.6" fill="url(#hue)" stroke="#d8d8d8" stroke-width=".6"/>
<rect x="827.8" y="99.8" width="72.84" height="45.65" fill="#a6a6a6"/>
<rect x="828.55" y="100.50" width="8.13" height="8.13" fill="#000000"/>
<rect x="837.58" y="100.50" width="8.13" height="8.13" fill="#993300"/>
<rect x="846.61" y="100.50" width="8.13" height="8.13" fill="#333300"/>
<rect x="855.64" y="100.50" width="8.13" height="8.13" fill="#003300"/>
<rect x="864.67" y="100.50" width="8.13" height="8.13" fill="#003366"/>
<rect x="873.70" y="100.50" width="8.13" height="8.13" fill="#000080"/>
<rect x="882.73" y="100.50" width="8.13" height="8.13" fill="#333399"/>
<rect x="891.76" y="100.50" width="8.13" height="8.13" fill="#333333"/>
<rect x="828.55" y="109.53" width="8.13" height="8.13" fill="#800000"/>
<rect x="837.58" y="109.53" width="8.13" height="8.13" fill="#FF6600"/>
<rect x="846.61" y="109.53" width="8.13" height="8.13" fill="#808000"/>
<rect x="855.64" y="109.53" width="8.13" height="8.13" fill="#008000"/>
<rect x="864.67" y="109.53" width="8.13" height="8.13" fill="#008080"/>
<rect x="873.70" y="109.53" width="8.13" height="8.13" fill="#0000FF"/>
<rect x="882.73" y="109.53" width="8.13" height="8.13" fill="#666699"/>
<rect x="891.76" y="109.53" width="8.13" height="8.13" fill="#808080"/>
<rect x="828.55" y="118.56" width="8.13" height="8.13" fill="#FF0000"/>
<rect x="837.58" y="118.56" width="8.13" height="8.13" fill="#FF9900"/>
<rect x="846.61" y="118.56" width="8.13" height="8.13" fill="#99CC00"/>
<rect x="855.64" y="118.56" width="8.13" height="8.13" fill="#339966"/>
<rect x="864.67" y="118.56" width="8.13" height="8.13" fill="#33CCCC"/>
<rect x="873.70" y="118.56" width="8.13" height="8.13" fill="#3366FF"/>
<rect x="882.73" y="118.56" width="8.13" height="8.13" fill="#800080"/>
<rect x="891.76" y="118.56" width="8.13" height="8.13" fill="#969696"/>
<rect x="828.55" y="127.59" width="8.13" height="8.13" fill="#FF00FF"/>
<rect x="837.58" y="127.59" width="8.13" height="8.13" fill="#FFCC00"/>
<rect x="846.61" y="127.59" width="8.13" height="8.13" fill="#FFFF00"/>
<rect x="855.64" y="127.59" width="8.13" height="8.13" fill="#00FF00"/>
<rect x="864.67" y="127.59" width="8.13" height="8.13" fill="#00FFFF"/>
<rect x="873.70" y="127.59" width="8.13" height="8.13" fill="#00CCFF"/>
<rect x="882.73" y="127.59" width="8.13" height="8.13" fill="#993366"/>
<rect x="891.76" y="127.59" width="8.13" height="8.13" fill="#C0C0C0"/>
<rect x="828.55" y="136.62" width="8.13" height="8.13" fill="#FF99CC"/>
<rect x="837.58" y="136.62" width="8.13" height="8.13" fill="#FFCC99"/>
<rect x="846.61" y="136.62" width="8.13" height="8.13" fill="#FFFF99"/>
<rect x="855.64" y="136.62" width="8.13" height="8.13" fill="#CCFFCC"/>
<rect x="864.67" y="136.62" width="8.13" height="8.13" fill="#CCFFFF"/>
<rect x="873.70" y="136.62" width="8.13" height="8.13" fill="#99CCFF"/>
<rect x="882.73" y="136.62" width="8.13" height="8.13" fill="#CC99FF"/>
<rect x="891.76" y="136.62" width="8.13" height="8.13" fill="#FFFFFF"/>
<rect x="828" y="148" width="35.6" height="12.4" fill="#f6f6f6"/><rect x="864.4" y="148" width="35.6" height="12.4" fill="#f6f6f6"/>
<path d="M847.6 149.8L843.6 153.3L847.6 156.8M879.8 149.8L883.8 153.3L879.8 156.8" fill="none" stroke="#858585" stroke-width="1.15"/>
<rect x="828.6" y="166.8" width="20.2" height="19.8" fill="#6e6e6e"/>
<rect x="827.4" y="165.7" width="20" height="19.6" fill="#fff" stroke="#2e2e2e" stroke-width="1"/>
<g transform="translate(832.2,167.6)"><path d="M.6 .6V11.8L3.3 9.4L5.4 13.9L7.3 13L5.3 8.6H8.9Z" fill="#fff" stroke="#000" stroke-width="1.05" stroke-linejoin="round"/></g>
<g transform="translate(854,168)"><rect x=".5" y=".5" width="12.4" height="12" rx="1.6" fill="#dedede" stroke="#a2a2a2"/><rect x="1" y="1" width="11.4" height="2.6" fill="#bdbdbd"/><path d="M2.4 2.2H3.6M5.4 2.2H6.6M8.4 2.2H9.6" stroke="#eee" stroke-width="1.1"/><rect x="3.6" y="5.8" width="11" height="9.6" rx="1" fill="#ececec" stroke="#a2a2a2"/><path d="M5.6 8.6H7M8.4 8.6H12.6M5.6 11.4H7M8.4 11.4H12.6" stroke="#b4b4b4" stroke-width="1"/></g>
<g transform="translate(876.8,169)"><g transform="scale(1.22,1)"><path d="M3.4 9.4L1 6.6Q.4 5.4 1.6 5.2Q2.6 5.2 3.4 6.4V2.6Q3.6 1.4 4.6 1.6Q5.4 1.8 5.4 2.8V1.4Q5.6 .4 6.6 .5Q7.6 .6 7.6 1.6V2.4Q7.8 1.4 8.8 1.6Q9.8 1.8 9.8 2.8V3.8Q10.2 3 11 3.2Q12 3.6 11.8 4.8L11.6 10Q11.4 13 9.4 14.6H5Q3.6 12 3.4 9.4Z" fill="#ededed" stroke="#a9a9a9" stroke-width="1.1"/><path d="M5.4 3V7M7.6 2.6V7M9.8 4V7.4" stroke="#c0c0c0" stroke-width=".8"/></g></g>
<g transform="translate(831.3,192.2)"><path d="M1 12.6L1.6 10.2L7.6 4.2L9.6 6.2L3.6 12.2Z" fill="#ececec" stroke="#9e9e9e" stroke-width="1"/><path d="M7 3L10.8 6.8" stroke="#8a8a8a" stroke-width="1.8"/><path d="M8.6 3.6L10.6 1.4Q12.4 -.2 13.6 1Q14.6 2.4 13.2 4L11 6Z" fill="#878787" stroke="#878787" stroke-width=".8"/></g>
<g transform="translate(853.4,191)"><path d="M6.4 6.2L14.6 14.2" stroke="#9a9a9a" stroke-width="2.2"/><path d="M6.8 6.6L14.2 13.8" stroke="#d6d6d6" stroke-width=".7"/><path d="M4.6 .6L5.2 3.4M1.2 2.6L3.8 4.4M.4 6.4L3.2 6.2M8.2 1L7.2 3.4M1.6 9.6L3.6 8M10 3.2L8.6 4.6" stroke="#9a9a9a" stroke-width="1"/></g>
<g transform="translate(879,192.2)"><path d="M.6 12.8L12.2 .8" stroke="#a0a0a0" stroke-width="2" stroke-linecap="butt"/></g>
<g transform="translate(830,214)"><path d="M5.2 5.2L10 1.6L14.6 9.4L8.4 13.8Z" fill="#f0f0f0" stroke="#a2a2a2" stroke-width="1.1"/><path d="M5.4 5.4Q2 5.6 1 8.4Q.4 11 1.4 13.2Q2.8 11 3 8.4Q3.6 6.6 5.4 5.4Z" fill="#d0d0d0" stroke="#a2a2a2" stroke-width=".9"/><path d="M6.4 3Q6 .6 8 .6Q10 .8 10.4 3.8" fill="none" stroke="#a2a2a2" stroke-width="1"/><circle cx="8.2" cy="6" r=".8" fill="#a9a9a9"/></g>
<g transform="translate(852.8,213)"><rect x="4.4" y="5.4" width="8.2" height="9.8" rx="1.2" fill="#e6e6e6" stroke="#a2a2a2" stroke-width="1.1"/><rect x="6.2" y="8" width="4.6" height="4.6" fill="#d2d2d2" stroke="#b0b0b0" stroke-width=".8"/><path d="M6.2 5.2Q6.4 3.2 8.4 3.2Q10.6 3.2 10.8 5.2Z" fill="#b2b2b2"/><rect x="7.4" y="1.6" width="2.4" height="1.8" fill="#a2a2a2"/><path d="M.6 .6L1.6 1.2M2.8 .4L3.6 1M1 3L2.4 3.2M3.8 2.4L5.2 2.8M1.6 5L3 4.8M4.6 1.2L5.6 1.6" stroke="#a6a6a6" stroke-width=".9"/></g>
<g transform="translate(878,216.5)"><path d="M.6 6.4L6.8 .6H13.6L7.4 6.4Z" fill="#e9e9e9" stroke="#a0a0a0" stroke-width="1"/><path d="M.6 6.4H7.4V9.8H.6Z" fill="#cfcfcf" stroke="#a0a0a0" stroke-width="1"/><path d="M7.4 6.4L13.6 .6V4L7.4 9.8Z" fill="#bdbdbd" stroke="#a0a0a0" stroke-width="1"/></g>
<g transform="translate(830.2,235)"><path d="M12.2 .4L5.8 9.2L8 10.8L13.6 1.2Z" fill="#e2e2e2" stroke="#9c9c9c" stroke-width="1"/><path d="M5.6 9Q2.6 11 .6 15.6Q6 15 8.4 11Z" fill="#c4c4c4" stroke="#989898" stroke-width="1"/><path d="M7.4 7.6L9.4 9" stroke="#8e8e8e" stroke-width="1.2"/></g>
<g transform="translate(854,235)"><path d="M12.2 .4L5.8 9.2L8 10.8L13.6 1.2Z" fill="#e2e2e2" stroke="#9c9c9c" stroke-width="1"/><path d="M5.6 9Q2.6 11 .6 15.6Q6 15 8.4 11Z" fill="#c4c4c4" stroke="#989898" stroke-width="1"/><path d="M7.4 7.6L9.4 9" stroke="#8e8e8e" stroke-width="1.2"/><path d="M9 12.2L11.4 11.8L12 9.4L12.8 11.8L15.2 12.2L13.2 13.4L13.6 15.8L12 14.2L10 15.6L10.8 13.4Z" fill="#9a9a9a"/></g>
<g transform="translate(878,237)"><circle cx="7" cy="2.6" r="2.4" fill="#b6b6b6" stroke="#a4a4a4" stroke-width=".7"/><path d="M5.8 4.6H8.2L8.8 8H5.2Z" fill="#bdbdbd"/><path d="M1 8.4Q1 7.6 2 7.6H12Q13 7.6 13 8.4V10.6H1Z" fill="#c6c6c6" stroke="#a2a2a2" stroke-width=".9"/><rect x=".6" y="10.8" width="12.8" height="2.8" rx=".8" fill="#a9a9a9"/></g>
<g transform="translate(831.9,258)"><path d="M5.4 .6Q7.4 5.4 9.6 9Q11 12 8.6 13.8Q5.4 15.4 2.2 13.8Q-.2 12 1.2 9Q3.4 5.4 5.4 .6Z" fill="#efefef" stroke="#a4a4a4" stroke-width="1.05"/></g>
<g transform="translate(854.5,259)"><path d="M6.4 1L3.6 2L1.2 5L2.4 6.6L4.6 5.6L4.2 8L.7 13.2L2.2 14.6L7.4 10L9.8 8.6Z" fill="#dadada" stroke="#868686" stroke-width="1.05" stroke-linejoin="round"/><path d="M6.4 .8L12.8 .5L13 6.6L9.8 8.6Z" fill="#fafafa" stroke="#8a8a8a" stroke-width="1"/><path d="M2.6 3.4L4.6 4.8M4 2.2L6 3.8M4.6 5.6L6.6 6.6" stroke="#8a8a8a" stroke-width=".9"/></g>
<g transform="translate(877,260)"><path d="M.8 8.2L7 2.8L11.6 8L5.6 13.6Z" fill="#d8d8d8" stroke="#a0a0a0" stroke-width="1"/><path d="M2.6 8.4L7.4 12M4.4 6.8L9 10.4M6 5.4L10.4 9" stroke="#b4b4b4" stroke-width=".8"/><path d="M8.6 4.4L12.8 .8L15 3L11 6.6Z" fill="#c2c2c2" stroke="#a0a0a0" stroke-width="1"/></g>
<g transform="translate(831,281.4)"><path d="M.8 1Q4 2.4 7 1Q10 -.2 13.4 1Q12.4 4 13.2 7Q14.2 10.4 13.4 13.4Q10 12.2 7 13.4Q4 14.6 .8 13.4Q2 10 1 7Q0 4 .8 1Z" fill="#ececec" stroke="#a2a2a2" stroke-width="1.1"/><path d="M5 1.6Q4.2 7 5.2 13.4M9.4 .8Q8.6 7 9.6 13M1.2 5Q7 6.2 13 4.8M1.4 9.4Q7 10.4 13.4 9.2" fill="none" stroke="#a6a6a6" stroke-width="1"/></g>
<g transform="translate(853.7,281)"><rect x=".5" y=".5" width="14" height="14" fill="#a6a6a6" stroke="#9a9a9a"/><rect x="2.2" y="2" width="10.6" height="11" fill="#c4c4c4"/><ellipse cx="7.4" cy="6" rx="2.2" ry="2.8" fill="#dedede"/><path d="M4.6 6Q4.4 2.6 7.4 2.6Q10.4 2.6 10.2 6Q10.6 9 11.6 10L3.2 10Q4.4 9 4.6 6Z" fill="#9a9a9a"/><ellipse cx="7.4" cy="6.2" rx="1.7" ry="2.3" fill="#d9d9d9"/><path d="M2.8 13Q3.6 9.6 7.4 9.6Q11.2 9.6 12.2 13Z" fill="#b2b2b2"/></g>
<g transform="translate(878.8,281.5)"><path d="M6.6 3.4Q11 2 12.4 5Q13 8.6 10.4 12Q8.2 15 6.6 15.4Q5 15 2.8 12Q.2 8.6 .8 5Q2.2 2 6.6 3.4Z" fill="#bcbcbc" stroke="#adadad" stroke-width=".8"/><path d="M6.6 3.6L3.2 1.6L5.2 1.4L6.6 .2L8 1.4L10 1.6Z" fill="#c9c9c9" stroke="#b4b4b4" stroke-width=".6"/><path d="M6.6 4V15" stroke="#cfcfcf" stroke-width=".7"/><path d="M6.8 4Q12 3 12 7Q11.6 11 6.8 15Z" fill="#b0b0b0" opacity=".6"/></g>
<rect x="826" y="307.2" width="79" height="1.4" fill="url(#hsep)"/>
<rect x="828.45" y="316.95" width="21.4" height="20.4" fill="#fdfdfd" stroke="#b4b4b4" stroke-width="1.1"/>
<rect x="852.5500000000001" y="316.95" width="21.4" height="20.4" fill="#fdfdfd" stroke="#b4b4b4" stroke-width="1.1"/>
<rect x="876.6500000000001" y="316.95" width="21.4" height="20.4" fill="#fdfdfd" stroke="#b4b4b4" stroke-width="1.1"/>
<rect x="828.45" y="340.55" width="21.4" height="20.4" fill="#fdfdfd" stroke="#b4b4b4" stroke-width="1.1"/>
<rect x="852.5500000000001" y="340.55" width="21.4" height="20.4" fill="#fdfdfd" stroke="#b4b4b4" stroke-width="1.1"/>
<rect x="876.6500000000001" y="340.55" width="21.4" height="20.4" fill="#fdfdfd" stroke="#b4b4b4" stroke-width="1.1"/>
<rect x="828.45" y="363.95" width="21.4" height="20.4" fill="#fdfdfd" stroke="#b4b4b4" stroke-width="1.1"/>
<rect x="852.5500000000001" y="363.95" width="21.4" height="20.4" fill="#fdfdfd" stroke="#b4b4b4" stroke-width="1.1"/>
<rect x="876.6500000000001" y="363.95" width="21.4" height="20.4" fill="#fdfdfd" stroke="#b4b4b4" stroke-width="1.1"/>
<rect x="828.45" y="387.55" width="21.4" height="20.4" fill="#fdfdfd" stroke="#b4b4b4" stroke-width="1.1"/>
<rect x="852.5500000000001" y="387.55" width="21.4" height="20.4" fill="#fdfdfd" stroke="#b4b4b4" stroke-width="1.1"/>
<rect x="876.6500000000001" y="387.55" width="21.4" height="20.4" fill="#fdfdfd" stroke="#b4b4b4" stroke-width="1.1"/>
<rect x="828.45" y="410.84999999999997" width="21.4" height="20.4" fill="#fdfdfd" stroke="#b4b4b4" stroke-width="1.1"/>
<rect x="852.5500000000001" y="410.84999999999997" width="21.4" height="20.4" fill="#fdfdfd" stroke="#b4b4b4" stroke-width="1.1"/>
<rect x="876.6500000000001" y="410.84999999999997" width="21.4" height="20.4" fill="#fdfdfd" stroke="#b4b4b4" stroke-width="1.1"/>
<g transform="translate(828,316.5)"><rect x="4.8" y="6.2" width="12.6" height="9" fill="none" stroke="#8d8d8d" stroke-width="1.3"/></g>
<g transform="translate(852.1,316.5)"><circle cx="11" cy="10.2" r="6.2" fill="none" stroke="#8d8d8d" stroke-width="1.2"/></g>
<g transform="translate(876.2,316.5)"><rect x="5.2" y="6.2" width="12.6" height="9" rx="3" fill="none" stroke="#8d8d8d" stroke-width="1.3"/></g>
<g transform="translate(828,340.1)"><path d="M11 3.8L17.6 10.6L11 17.4L4.4 10.6Z" fill="none" stroke="#939393" stroke-width="1"/></g>
<g transform="translate(852.1,340.1)"><path d="M11.2 4.2L16.8 15.4H5.6Z" fill="none" stroke="#909090" stroke-width="1.1"/><path d="M5.6 15.6H16.8" stroke="#909090" stroke-width="1"/></g>
<g transform="translate(876.2,340.1)"><path d="M6.2 5L17.4 10.6L6.2 16Z" fill="none" stroke="#909090" stroke-width="1.1"/><path d="M6 5V16" stroke="#909090" stroke-width="1"/></g>
<g transform="translate(828,363.5)"><ellipse cx="10.6" cy="8.4" rx="7" ry="3.8" transform="rotate(-8 10.6 8.4)" fill="none" stroke="#8d8d8d" stroke-width="1.2" stroke-dasharray="2.2 .8"/><path d="M4.4 10.4Q3.6 12.4 5.4 12.6Q7 12.4 6.4 11M5.4 12.6Q6.8 14.6 5.8 16.4" fill="none" stroke="#8d8d8d" stroke-width="1.1"/></g>
<g transform="translate(852.1,363.5)"><path d="M4.2 8.4L7.6 5.6L11.4 9.2L17 3.4V15H9" fill="none" stroke="#8d8d8d" stroke-width="1.2"/><path d="M4.2 8.4L9 13" stroke="#8d8d8d" stroke-width="1.1"/><path d="M9.4 13.4Q7.6 14 8.4 15.4Q9.6 16.2 10.2 15M9 15.8Q10 17 9.4 18.4" fill="none" stroke="#8d8d8d" stroke-width="1"/></g>
<g transform="translate(876.2,363.5)"><path d="M4.6 15.4V6.8H8.4L9.6 8.2H14.4V10" fill="#e2e2e2" stroke="#8d8d8d" stroke-width="1.05"/><path d="M4.6 15.4L7.4 10H18.4L15.4 15.4Z" fill="#cfcfcf" stroke="#8d8d8d" stroke-width="1.05"/><path d="M12 5.6Q13.8 3.4 16.2 4.4Q17.4 5 17.6 6.4" fill="none" stroke="#8d8d8d" stroke-width="1"/><path d="M18.8 5L17.8 7.6L15.8 6Z" fill="#8d8d8d"/></g>
<g transform="translate(828,387.1)"><rect x="4.8" y="4.6" width="12.8" height="12.2" fill="none" stroke="#777" stroke-width="1.2" stroke-dasharray="1.2 1.1"/><path d="M7.6 8.7H14.8M7.6 10.6H14.8M7.6 12.5H14.8" stroke="#9c9c9c" stroke-width="1.6"/></g>
<g transform="translate(852.1,387.1)"><rect x="4.8" y="4.6" width="12.8" height="12.2" fill="none" stroke="#777" stroke-width="1.2" stroke-dasharray="1.2 1.1"/><text x="11.2" y="13.3" text-anchor="middle" font-family="Liberation Sans, sans-serif" font-size="7.6" fill="#a4a4a4" letter-spacing="-.2">4:3</text></g>
<g transform="translate(876.2,387.1)"><rect x="4.8" y="4.6" width="12.8" height="12.2" fill="none" stroke="#777" stroke-width="1.2" stroke-dasharray="1.2 1.1"/><text x="11.2" y="13.3" text-anchor="middle" font-family="Liberation Sans, sans-serif" font-size="7.6" fill="#a4a4a4" letter-spacing="-.2">3:2</text></g>
<g transform="translate(828,410.4)"><rect x="4.8" y="4.6" width="12.8" height="12.2" fill="none" stroke="#777" stroke-width="1.2" stroke-dasharray="1.2 1.1"/><path d="M9.4 7H13.4M9.4 14.4H13.4" stroke="#9a9a9a" stroke-width="1.2"/><rect x="10.2" y="7" width="2.4" height="7.4" fill="#9e9e9e"/></g>
<g transform="translate(852.1,410.4)"><rect x="6.6" y="5.6" width="9.4" height="9.6" fill="none" stroke="#8a8a8a" stroke-width="1" stroke-dasharray="1.2 1.2"/><path d="M4.8 5.6H8.4M6.6 3.8V7.3999999999999995M5.3 4.3L7.8999999999999995 6.8999999999999995M5.3 6.8999999999999995L7.8999999999999995 4.3" stroke="#8c8c8c" stroke-width=".9"/><path d="M14.2 5.6H17.8M16 3.8V7.3999999999999995M14.7 4.3L17.3 6.8999999999999995M14.7 6.8999999999999995L17.3 4.3" stroke="#8c8c8c" stroke-width=".9"/><path d="M4.8 15.2H8.4M6.6 13.399999999999999V17.0M5.3 13.899999999999999L7.8999999999999995 16.5M5.3 16.5L7.8999999999999995 13.899999999999999" stroke="#8c8c8c" stroke-width=".9"/><path d="M14.2 15.2H17.8M16 13.399999999999999V17.0M14.7 13.899999999999999L17.3 16.5M14.7 16.5L17.3 13.899999999999999" stroke="#8c8c8c" stroke-width=".9"/></g>
<g transform="translate(876.2,410.4)"><rect x="4.4" y="4.4" width="13.6" height="12.6" fill="#e6e6e6" stroke="#b0b0b0" stroke-width="1"/><rect x="4.4" y="4.4" width="13.6" height="2.4" fill="#c6c6c6"/><path d="M6.4 8.6H13M6.4 11.4H8M9.4 11.4H15M6.4 13.8H8M9.4 13.8H12" stroke="#bdbdbd" stroke-width="1"/></g></svg>
<svg class="a" style="left:830px;top:440px" width="17" height="17"><rect x="2.10" y="1.80" width="11.80" height="11.40" fill="#fff" stroke="#c9c9c9" stroke-width="1.6"/></svg>
<svg class="a" style="left:830px;top:458px" width="17" height="17"><rect x="2.10" y="1.80" width="11.80" height="11.40" fill="#fff" stroke="#c9c9c9" stroke-width="1.6"/></svg>
<div class="t" style="left:848.40px;top:439.69px;font-size:11px;color:#868686;letter-spacing:-0.369px;">Stroke</div>
<div class="t" style="left:848.40px;top:457.59px;font-size:11px;color:#868686;letter-spacing:-0.183px;">Fill</div>
<div class="a" style="left:250px;top:109px;width:293px;height:436.5px;background:#f2f2f2;border:1px solid #8fa8d8;box-shadow:0 0 0 .5px rgba(140,165,215,.35)"></div>
<div class="a" style="left:251px;top:110px;width:291px;height:28px;background:#e6e6e6"></div>
<div class="t" style="left:255.40px;top:116.77px;font-size:10.2px;color:#000;font-weight:bold;letter-spacing:-0.151px;">New</div>
<svg class="a" style="left:516px;top:118px;" width="12" height="12" viewBox="0 0 12 12"><path d="M1 1.1L10.4 10.5M10.4 1.1L1 10.5" stroke="#111" stroke-width="1.15" fill="none"/></svg>
<div class="a" style="left:270px;top:157px;width:253px;height:59.5px;border:1px solid #d2d2d2"></div>
<div class="a" style="left:280.3px;top:156px;width:115.8px;height:3px;background:#f2f2f2"></div>
<div class="t" style="left:283.30px;top:148.79px;font-size:11px;color:#8d8d8d;letter-spacing:-0.166px;">Size in pixels / Memory</div>
<div class="a" style="left:270px;top:231.3px;width:253px;height:246px;border:1px solid #d2d2d2"></div>
<div class="a" style="left:280.3px;top:230.3px;width:47.9px;height:3px;background:#f2f2f2"></div>
<div class="t" style="left:283.30px;top:223.09px;font-size:11px;color:#000;letter-spacing:-0.403px;">New size</div>
<div class="t" style="left:284.30px;top:167.59px;font-size:11px;color:#000;letter-spacing:-0.064px;">Width :</div>
<div class="t" style="left:363.60px;top:167.59px;font-size:11px;color:#000;letter-spacing:-0.130px;">Height :</div>
<div class="t" style="left:442.60px;top:167.59px;font-size:11px;color:#000;letter-spacing:-0.018px;">Memory :</div>
<svg class="a" style="left:283px;top:182px" width="70" height="24"><rect x="1.85" y="2.05" width="64.30" height="19.10" fill="#fff" stroke="#8e8e8e" stroke-width="1.7"/></svg>
<div class="t" style="left:286.60px;top:184.79px;font-size:11px;color:#000;letter-spacing:-0.758px;">800</div>
<svg class="a" style="left:362px;top:182px" width="70" height="24"><rect x="1.85" y="2.05" width="64.30" height="19.10" fill="#fff" stroke="#8e8e8e" stroke-width="1.7"/></svg>
<div class="t" style="left:366.30px;top:184.79px;font-size:11px;color:#000;letter-spacing:-0.758px;">600</div>
<svg class="a" style="left:441px;top:182px" width="69" height="24"><rect x="2.25" y="2.05" width="64.10" height="19.10" fill="#fff" stroke="#8e8e8e" stroke-width="1.7"/></svg>
<div class="t" style="left:445.20px;top:184.79px;font-size:11px;color:#000;letter-spacing:-0.340px;">1.37 Mb</div>
<div class="t" style="left:284.30px;top:244.29px;font-size:11px;color:#000;letter-spacing:-0.064px;">Width :</div>
<svg class="a" style="left:283px;top:259px" width="83" height="24"><rect x="1.85" y="1.85" width="78.10" height="18.60" fill="#fff" stroke="#8e8e8e" stroke-width="1.7"/></svg>
<div class="a" style="left:348.8px;top:261.7px;width:13.3px;height:16.900000000000002px;background:#f3f3f3"></div>
<svg class="a" style="left:351.6px;top:264.6px;" width="7.6" height="3.1" viewBox="0 0 7.6 3.1"><path d="M0 3.1L3.8 0L7.6 3.1" stroke="#8f8f8f" stroke-width="1" fill="none"/></svg>
<svg class="a" style="left:351.6px;top:272.6px;" width="7.6" height="3.1" viewBox="0 0 7.6 3.1"><path d="M0 0L3.8 3.1L7.6 0" stroke="#8f8f8f" stroke-width="1" fill="none"/></svg>
<div class="t" style="left:286.60px;top:261.09px;font-size:11px;color:#000;letter-spacing:-0.758px;">800</div>
<div class="t" style="left:284.30px;top:288.19px;font-size:11px;color:#000;letter-spacing:-0.130px;">Height :</div>
<svg class="a" style="left:283px;top:303px" width="83" height="24"><rect x="1.85" y="1.95" width="78.10" height="18.60" fill="#fff" stroke="#8e8e8e" stroke-width="1.7"/></svg>
<div class="a" style="left:348.8px;top:305.8px;width:13.3px;height:16.900000000000002px;background:#f3f3f3"></div>
<svg class="a" style="left:351.6px;top:308.70000000000005px;" width="7.6" height="3.1" viewBox="0 0 7.6 3.1"><path d="M0 3.1L3.8 0L7.6 3.1" stroke="#8f8f8f" stroke-width="1" fill="none"/></svg>
<svg class="a" style="left:351.6px;top:316.70000000000005px;" width="7.6" height="3.1" viewBox="0 0 7.6 3.1"><path d="M0 0L3.8 3.1L7.6 0" stroke="#8f8f8f" stroke-width="1" fill="none"/></svg>
<div class="t" style="left:286.60px;top:305.19px;font-size:11px;color:#000;letter-spacing:-0.758px;">600</div>
<div class="t" style="left:284.30px;top:332.39px;font-size:11px;color:#000;letter-spacing:-0.260px;">Resolution :</div>
<svg class="a" style="left:283px;top:347px" width="83" height="24"><rect x="1.85" y="2.15" width="78.10" height="18.60" fill="#fff" stroke="#8e8e8e" stroke-width="1.7"/></svg>
<div class="a" style="left:348.8px;top:350.0px;width:13.3px;height:16.900000000000002px;background:#f3f3f3"></div>
<svg class="a" style="left:351.6px;top:352.90000000000003px;" width="7.6" height="3.1" viewBox="0 0 7.6 3.1"><path d="M0 3.1L3.8 0L7.6 3.1" stroke="#8f8f8f" stroke-width="1" fill="none"/></svg>
<svg class="a" style="left:351.6px;top:360.90000000000003px;" width="7.6" height="3.1" viewBox="0 0 7.6 3.1"><path d="M0 0L3.8 3.1L7.6 0" stroke="#8f8f8f" stroke-width="1" fill="none"/></svg>
<div class="t" style="left:286.60px;top:349.39px;font-size:11px;color:#000;letter-spacing:-0.652px;">96.00</div>
<svg class="a" style="left:372px;top:266px;" width="16" height="52" viewBox="0 0 16 52"><path d="M1 3.4H8.6V48H1M8.6 25.6H14" stroke="#000" stroke-width="2.7" fill="none"/></svg>
<svg class="a" style="left:394px;top:281px" width="88" height="24"><rect x="1.85" y="2.35" width="82.60" height="18.60" fill="#fff" stroke="#8e8e8e" stroke-width="1.7"/></svg>
<svg class="a" style="left:465.7px;top:290.35px;" width="9.6" height="5.2" viewBox="0 0 9.6 5.2"><path d="M0 0L4.8 5.2L9.6 0" stroke="#777" stroke-width="1" fill="none"/></svg>
<div class="t" style="left:399.60px;top:283.99px;font-size:11px;color:#000;letter-spacing:-0.254px;">pixels</div>
<svg class="a" style="left:377px;top:347px" width="105" height="24"><rect x="1.85" y="2.15" width="99.50" height="18.50" fill="#fff" stroke="#8e8e8e" stroke-width="1.7"/></svg>
<svg class="a" style="left:465.59999999999997px;top:356.1px;" width="9.6" height="5.2" viewBox="0 0 9.6 5.2"><path d="M0 0L4.8 5.2L9.6 0" stroke="#777" stroke-width="1" fill="none"/></svg>
<div class="t" style="left:382.60px;top:349.79px;font-size:11px;color:#000;letter-spacing:0.084px;">pixels/inch</div>
<div class="t" style="left:284.30px;top:382.99px;font-size:11px;color:#000;letter-spacing:-0.190px;">Background :</div>
<svg class="a" style="left:283px;top:397px" width="69" height="23"><rect x="1.85" y="2.65" width="63.80" height="18.20" fill="#fff" stroke="#8e8e8e" stroke-width="1.7"/></svg>
<div class="a" style="left:332.8px;top:400.5px;width:15px;height:16.5px;background:#f1f1f1"></div>
<svg class="a" style="left:336.6px;top:406.95000000000005px;" width="7.4" height="4.2" viewBox="0 0 7.4 4.2"><path d="M0 0L3.7 4.2L7.4 0" stroke="#777" stroke-width="1" fill="none"/></svg>
<svg class="a" style="left:363px;top:380px" width="17" height="17"><rect x="2.00" y="2.40" width="11.60" height="11.60" fill="#fff" stroke="#1a1a1a" stroke-width="1.6"/></svg>
<div class="t" style="left:381.20px;top:380.49px;font-size:11px;color:#000;letter-spacing:-0.121px;">Background pattern :</div>
<svg class="a" style="left:362px;top:398px" width="127" height="23"><rect x="2.05" y="2.05" width="121.60" height="17.70" fill="#fff" stroke="#8e8e8e" stroke-width="1.7"/></svg>
<svg class="a" style="left:489.5px;top:401px;" width="17" height="15" viewBox="0 0 17 15"><g fill="none" stroke="#9a9a9a" stroke-width="1">
<path d="M1 13.4V4.3H4.8L6 5.6H10.6V7.4"/><path d="M1 13.4L3.6 7.4H14.6L11.6 13.4Z" fill="#e4e4e4"/>
<path d="M8.2 2.8C10.2 .8 12.6 1.2 13.6 3.2M13.8 1V3.4H11.4"/></g></svg>
<div class="t" style="left:284.30px;top:428.59px;font-size:11px;color:#000;letter-spacing:-0.551px;">Preset size :</div>
<svg class="a" style="left:282px;top:443px" width="207" height="23"><rect x="2.25" y="2.55" width="201.30" height="18.10" fill="#fff" stroke="#8e8e8e" stroke-width="1.7"/></svg>
<div class="a" style="left:469.2px;top:446.4px;width:15.5px;height:16.400000000000002px;background:#f1f1f1"></div>
<svg class="a" style="left:473.6px;top:452.8px;" width="7.4" height="4.2" viewBox="0 0 7.4 4.2"><path d="M0 0L3.7 4.2L7.4 0" stroke="#777" stroke-width="1" fill="none"/></svg>
<div class="t" style="left:288.00px;top:446.19px;font-size:11px;color:#000;letter-spacing:-0.170px;">&lt;Customized&gt;</div>
<svg class="a" style="left:269px;top:482px" width="17" height="17"><rect x="2.40" y="2.00" width="11.60" height="11.60" fill="#fff" stroke="#1a1a1a" stroke-width="1.6"/></svg>
<div class="t" style="left:288.00px;top:481.99px;font-size:11px;color:#000;letter-spacing:-0.074px;">Automatic transparency</div>
<div class="a" style="left:378px;top:504px;width:67px;height:22px;background:#cdcdcd;border:1px solid #6e6e6e"></div>
<div class="t" style="left:404.80px;top:507.39px;font-size:11px;color:#000;letter-spacing:-0.131px;">Ok</div>
<div class="a" style="left:455.2px;top:504px;width:67.2px;height:22px;background:#cdcdcd"></div>
<div class="t" style="left:472.30px;top:507.39px;font-size:11px;color:#000;letter-spacing:-0.308px;">Cancel</div>
</body></html>
